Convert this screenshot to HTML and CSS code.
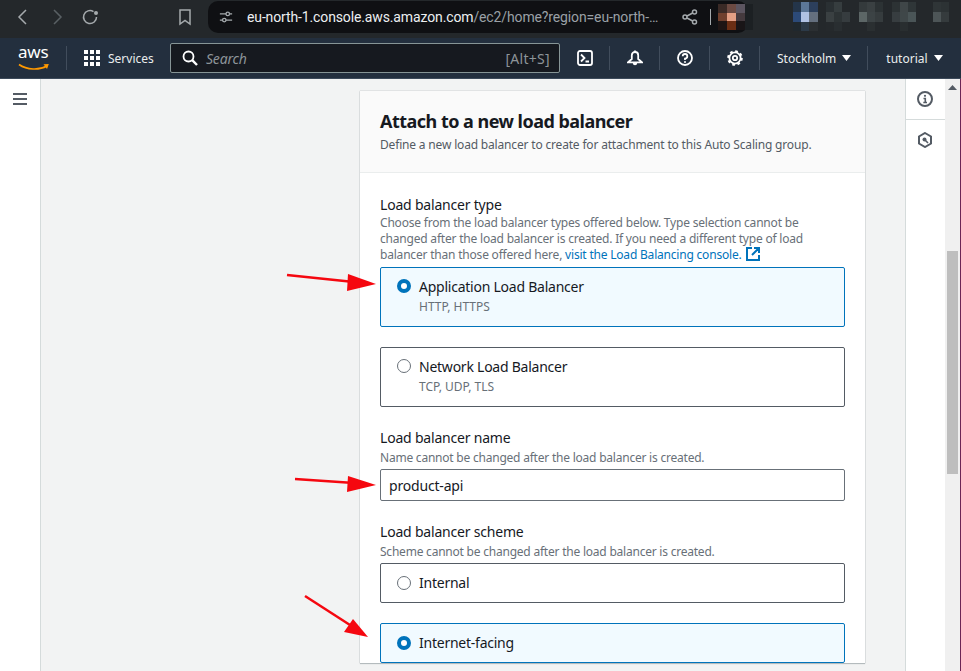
FILE: index.html
```html
<!DOCTYPE html>
<html lang="en">
<head>
<meta charset="utf-8">
<title>Attach to a new load balancer</title>
<link rel="stylesheet" href="styles.css">
</head>
<body>
<div class="chrome">
  <svg class="c-ico back" width="20" height="20" viewBox="0 0 20 20"><path d="M13 3 L6 10 L13 17" class="st-grey"/></svg>
  <svg class="c-ico fwd" width="20" height="20" viewBox="0 0 20 20"><path d="M7 3 L14 10 L7 17" class="st-dim"/></svg>
  <svg class="c-ico reload" width="20" height="20" viewBox="0 0 20 20"><path d="M16.5 10 A6.5 6.5 0 1 1 13.5 4.6" class="st-grey"/><circle cx="16" cy="6" r="2" class="fl-grey"/></svg>
  <svg class="c-ico mark" width="20" height="20" viewBox="0 0 20 20"><path d="M5 3 H15 V17 L10 13.5 L5 17 Z" class="st-grey"/></svg>
  <div class="url">
    <svg class="tune" width="14" height="14" viewBox="0 0 16 16"><path d="M1 4.5 H8 M12 4.5 H15 M1 11.5 H4 M8 11.5 H15" class="st-grey"/><circle cx="10" cy="4.5" r="2" class="st-grey"/><circle cx="6" cy="11.5" r="2" class="st-grey"/></svg>
    <span class="url-text"><span class="url-host">eu-north-1.console.aws.amazon.com</span>/ec2/home?region=eu-north-…</span>
    <svg class="share" width="16" height="16" viewBox="0 0 16 16"><circle cx="12.5" cy="3" r="2" class="st-grey"/><circle cx="12.5" cy="13" r="2" class="st-grey"/><circle cx="3" cy="8" r="2" class="st-grey"/><path d="M5 7 L10.7 4 M5 9 L10.7 12" class="st-grey"/></svg>
    <span class="url-sep"></span>
    <svg class="avatar" width="35" height="26" viewBox="0 0 35 30" preserveAspectRatio="none" shape-rendering="crispEdges">
      <rect x="0" y="0" width="9" height="10" fill="#3a2a26"/><rect x="9" y="0" width="9" height="10" fill="#6c4a42"/><rect x="18" y="0" width="9" height="10" fill="#5c5560"/><rect x="27" y="0" width="8" height="10" fill="#1c2023"/>
      <rect x="0" y="10" width="9" height="10" fill="#70402e"/><rect x="9" y="10" width="9" height="10" fill="#e49f84"/><rect x="18" y="10" width="9" height="10" fill="#453a3e"/><rect x="27" y="10" width="8" height="10" fill="#1c2023"/>
      <rect x="0" y="20" width="9" height="10" fill="#1e1514"/><rect x="9" y="20" width="9" height="10" fill="#6b2e14"/><rect x="18" y="20" width="9" height="10" fill="#191517"/><rect x="27" y="20" width="8" height="10" fill="#1c2023"/>
    </svg>
  </div>
  <svg class="blur" width="158" height="30" viewBox="0 0 158 30" shape-rendering="crispEdges">
    <rect x="0" y="0" width="8" height="10" fill="#24354a"/><rect x="8" y="0" width="8" height="10" fill="#5c7798"/><rect x="16" y="0" width="9" height="10" fill="#2c3f5c"/>
    <rect x="0" y="10" width="8" height="10" fill="#2c4a78"/><rect x="8" y="10" width="8" height="10" fill="#b0c2e4"/><rect x="16" y="10" width="9" height="10" fill="#646f7e"/>
    <rect x="0" y="20" width="8" height="9" fill="#20282e"/><rect x="8" y="20" width="8" height="9" fill="#2c3a48"/><rect x="16" y="20" width="9" height="9" fill="#2b2f32"/>
    <rect x="33" y="0" width="8" height="10" fill="#2a3033"/><rect x="41" y="0" width="8" height="10" fill="#363d3f"/>
    <rect x="33" y="10" width="8" height="10" fill="#3a4042"/><rect x="41" y="10" width="8" height="10" fill="#2d3335"/><rect x="49" y="10" width="8" height="10" fill="#363c3f"/>
    <rect x="33" y="20" width="8" height="9" fill="#25292c"/><rect x="41" y="20" width="8" height="9" fill="#292e31"/>
    <rect x="66" y="0" width="8" height="10" fill="#343a3c"/><rect x="74" y="0" width="8" height="10" fill="#3a4042"/><rect x="82" y="0" width="8" height="10" fill="#2c3234"/>
    <rect x="66" y="10" width="8" height="10" fill="#5c6666"/><rect x="74" y="10" width="8" height="10" fill="#3c4345"/><rect x="82" y="10" width="8" height="10" fill="#363c3e"/>
    <rect x="74" y="20" width="8" height="9" fill="#2a2f31"/>
    <rect x="99" y="0" width="8" height="10" fill="#2c3234"/><rect x="107" y="0" width="8" height="10" fill="#3f4648"/><rect x="115" y="0" width="8" height="10" fill="#2f3638"/>
    <rect x="99" y="10" width="8" height="10" fill="#373d40"/><rect x="107" y="10" width="8" height="10" fill="#3f4749"/><rect x="115" y="10" width="8" height="10" fill="#4a5557"/>
    <rect x="107" y="20" width="8" height="9" fill="#292e30"/>
    <rect x="140" y="0" width="8" height="10" fill="#2f3537"/><rect x="148" y="0" width="8" height="10" fill="#2c3234"/>
    <rect x="140" y="10" width="8" height="10" fill="#4d5557"/><rect x="148" y="10" width="8" height="10" fill="#353b3d"/>
  </svg>
</div>

<nav class="nav">
  <div class="aws">
    <span class="aws-text">aws</span>
    <svg class="aws-smile" width="32" height="8" viewBox="0 0 32 8"><path d="M1 1.5 C9 7 21 7.5 29 3" class="smile"/><path d="M25.5 1.2 L30.8 1 L29 6 Z" class="smile-tip"/></svg>
  </div>
  <span class="nav-sep first"></span>
  <svg class="grid-ico" width="16" height="16" viewBox="0 0 16 16">
    <rect x="0" y="0" width="4" height="4"/><rect x="6" y="0" width="4" height="4"/><rect x="12" y="0" width="4" height="4"/>
    <rect x="0" y="6" width="4" height="4"/><rect x="6" y="6" width="4" height="4"/><rect x="12" y="6" width="4" height="4"/>
    <rect x="0" y="12" width="4" height="4"/><rect x="6" y="12" width="4" height="4"/><rect x="12" y="12" width="4" height="4"/>
  </svg>
  <span class="nav-text services">Services</span>
  <div class="search">
    <svg width="16" height="16" viewBox="0 0 16 16"><circle cx="6.5" cy="6.5" r="5" class="st-white"/><path d="M10.2 10.2 L15 15" class="st-white-b"/></svg>
    <span class="search-ph">Search</span>
    <span class="search-key">[Alt+S]</span>
  </div>
  <svg class="nav-ico" width="16" height="16" viewBox="0 0 16 16"><rect x="1" y="1" width="14" height="14" rx="2" class="st-white"/><path d="M4 4.5 L7.5 8 L4 11.5 M8.5 11.5 H12" class="st-white"/></svg>
  <span class="nav-sep"></span>
  <svg class="nav-ico" width="16" height="16" viewBox="0 0 16 16"><path d="M4.8 9 V5.2 A3.2 3.2 0 0 1 11.2 5.2 V9 L15 12.3 H1 Z" class="st-white"/><path d="M8 0.5 V2" class="st-white"/><path d="M5.8 13 A2.2 2.2 0 0 0 10.2 13 Z" class="fl-white"/></svg>
  <span class="nav-sep"></span>
  <svg class="nav-ico" width="16" height="16" viewBox="0 0 16 16"><circle cx="8" cy="8" r="7" class="st-white"/><path d="M5.7 6.2 A2.3 2.3 0 1 1 8 8.6 V10" class="st-white"/><circle cx="8" cy="12" r="1" class="fl-white"/></svg>
  <span class="nav-sep"></span>
  <svg class="nav-ico" width="16" height="16" viewBox="0 0 16 16"><circle cx="8" cy="8" r="5.6" class="st-white"/><circle cx="8" cy="8" r="6.8" class="gear-teeth"/><circle cx="8" cy="8" r="2.2" class="st-white"/></svg>
  <span class="nav-sep"></span>
  <span class="nav-text region">Stockholm</span>
  <svg class="caret" width="9" height="6" viewBox="0 0 9 6"><path d="M0 0 H9 L4.5 6 Z" class="fl-white"/></svg>
  <span class="nav-sep"></span>
  <span class="nav-text user">tutorial</span>
  <svg class="caret" width="9" height="6" viewBox="0 0 9 6"><path d="M0 0 H9 L4.5 6 Z" class="fl-white"/></svg>
</nav>

<div class="page">
  <aside class="rail-left">
    <svg width="14" height="12" viewBox="0 0 14 12"><path d="M0 1 H14 M0 6 H14 M0 11 H14" class="st-rail"/></svg>
  </aside>
  <main class="content">
    <section class="card">
      <header class="card-head">
        <h1>Attach to a new load balancer</h1>
        <p>Define a new load balancer to create for attachment to this Auto Scaling group.</p>
      </header>
      <div class="card-body">
        <div class="label">Load balancer type</div>
        <p class="hint">Choose from the load balancer types offered below. Type selection cannot be changed after the load balancer is created. If you need a different type of load balancer than those offered here, <a href="#">visit the Load Balancing console.<svg class="ext" width="14" height="14" viewBox="0 0 14 14"><path d="M6 1 H1 V13 H13 V8 M8 1 H13 V6 M13 1 L6 8" class="st-link"/></svg></a></p>
        <div class="opts">
          <div class="opt on tall"><span class="radio"></span><div><div class="opt-title">Application Load Balancer</div><div class="opt-sub">HTTP, HTTPS</div></div></div>
          <div class="opt tall"><span class="radio"></span><div><div class="opt-title">Network Load Balancer</div><div class="opt-sub">TCP, UDP, TLS</div></div></div>
        </div>
        <div class="label gap-top">Load balancer name</div>
        <p class="hint one">Name cannot be changed after the load balancer is created.</p>
        <div class="input">product-api</div>
        <div class="label gap-top">Load balancer scheme</div>
        <p class="hint one">Scheme cannot be changed after the load balancer is created.</p>
        <div class="opts">
          <div class="opt"><span class="radio"></span><div class="opt-title">Internal</div></div>
          <div class="opt on"><span class="radio"></span><div class="opt-title">Internet-facing</div></div>
        </div>
      </div>
    </section>
  </main>
  <aside class="rail-right">
    <div class="rail-cell">
      <svg width="16" height="16" viewBox="0 0 16 16"><circle cx="8" cy="8" r="7" class="st-rail"/><path d="M6.5 7.5 H8.3 V11.5 M6.3 11.5 H10" class="st-rail-t"/><circle cx="8" cy="4.8" r="1.1" class="fl-rail"/></svg>
    </div>
    <div class="rail-cell">
      <svg width="16" height="16" viewBox="0 0 16 16"><path d="M8 1 L14 4.5 V11.5 L8 15 L2 11.5 V4.5 Z" class="st-rail"/><circle cx="7.5" cy="7.5" r="2" class="fl-rail"/><path d="M8 8 L11 11" class="st-rail-t"/></svg>
    </div>
  </aside>
  <div class="scrollbar">
    <svg width="9" height="5" viewBox="0 0 9 5"><path d="M0 5 L4.5 0 L9 5 Z" class="fl-rail"/></svg>
    <div class="thumb"></div>
  </div>
  <div class="edge"></div>
</div>

<svg class="arrows" width="961" height="671" viewBox="0 0 961 671">
  <path d="M287 275 L354 282" class="arrow-line"/><path d="M376 284 L348 274 L347 291 Z" class="arrow-head"/>
  <path d="M295 479 L354 483" class="arrow-line"/><path d="M376 485 L348 476 L347 492 Z" class="arrow-head"/>
  <path d="M305 596 L350 625" class="arrow-line"/><path d="M368 637 L344 632 L353 619 Z" class="arrow-head"/>
</svg>
</body>
</html>
```
FILE: styles.css
```css
* { box-sizing: border-box; }
html, body { margin: 0; height: 671px; overflow: hidden; }
body { font-family: "Noto Sans", sans-serif; background: #fff; position: relative; display: flex; flex-direction: column; }
h1, p { margin: 0; }

.st-grey, .st-dim, .st-white, .st-white-b, .st-link, .st-rail, .st-rail-t { fill: none; stroke-width: 1.5; }
.st-grey { stroke: #a5aaad; }
.st-dim { stroke: #596064; }
.st-white { stroke: #fff; stroke-width: 1.8; }
.st-white-b { stroke: #fff; stroke-width: 2.4; }
.st-link { stroke: #0073bb; stroke-width: 2; }
.st-rail { stroke: #545b64; stroke-width: 2; }
.st-rail-t { stroke: #545b64; stroke-width: 1.6; }
.gear-teeth { fill: none; stroke: #fff; stroke-width: 2; stroke-dasharray: 2.7 2.64; }
.fl-grey { fill: #a5aaad; }
.fl-white { fill: #fff; }
.fl-rail { fill: #545b64; }

.chrome { height: 38px; flex: none; background: #24282b; display: flex; align-items: center; padding: 0 0 4px 13px; }
.c-ico { flex: none; }
.back { margin-right: 14px; }
.fwd { margin-right: 13px; }
.reload { margin-right: 75px; }
.mark { margin-right: 13px; }
.url { width: 540px; height: 32px; flex: none; background: #0f1013; border-radius: 10px; display: flex; align-items: center; padding-left: 11px; }
.tune { flex: none; margin-right: 14px; }
.url-text { font-family: Roboto, sans-serif; font-size: 14px; letter-spacing: -0.13px; color: #9aa0a6; white-space: nowrap; width: 423px; flex: none; }
.url-host { color: #eceff1; }
.share { flex: none; margin-left: 12px; }
.url-sep { width: 1px; height: 16px; background: #a5aaad; margin-left: 12px; flex: none; }
.avatar { flex: none; margin-left: 7px; }
.blur { flex: none; margin-left: 45px; }

.nav { height: 41px; flex: none; background: #232f3e; border-bottom: 1px solid #3c4a5a; display: flex; align-items: center; padding-left: 18px; }
.aws { width: 32px; height: 30px; display: flex; flex-direction: column; align-items: flex-start; flex: none; }
.aws-text { font-size: 17px; line-height: 17px; color: #fff; letter-spacing: -0.2px; display: block; height: 20px; }
.aws-smile { display: block; }
.smile { fill: none; stroke: #f90; stroke-width: 1.6; }
.smile-tip { fill: #f90; }
.nav-sep { width: 1px; height: 24px; background: #414d5c; margin: 0 17px 0 16px; flex: none; }
.grid-ico { fill: #fff; flex: none; margin-right: 8px; }
.nav-text { font-size: 12px; color: #eaeded; white-space: nowrap; }
.services { width: 46px; margin-right: 16px; }
.search { width: 390px; height: 30px; background: #16191f; border: 1px solid #879596; border-radius: 2px; display: flex; align-items: center; padding: 0 9px 0 11px; margin-right: 17px; flex: none; }
.search-ph { font-size: 14px; font-style: italic; color: #8d9499; margin-left: 8px; flex: 1; padding-top: 1px; letter-spacing: -0.2px; }
.search-key { font-size: 14px; color: #8d9499; padding-top: 1px; letter-spacing: 0.3px; }
.nav-ico { flex: none; }
.user { margin-left: 1px; }
.caret { flex: none; margin-left: 6px; }

.page { flex: 1; min-height: 0; display: flex; }
.rail-left { width: 41px; flex: none; background: #fff; border-right: 1px solid #d5dbdb; padding: 14px 13px; }
.rail-left svg { display: block; }
.content { flex: 1; min-width: 0; background: #f2f3f3; padding: 12px 40px 0 319px; overflow: hidden; }
.card { background: #fff; box-shadow: 0 0 1px 0 rgba(0,28,36,.4), 0 1px 1px 0 rgba(0,28,36,.2); width: 505px; }
.card-head { background: #fafafa; border-bottom: 1px solid #eaeded; padding: 19px 20px 20px; height: 82px; }
.card-head h1 { font-size: 18px; line-height: 22px; font-weight: 700; color: #16191f; letter-spacing: -0.52px; }
.card-head p { font-size: 12px; line-height: 20px; color: #545b64; margin-top: 3px; letter-spacing: -0.175px; }
.card-body { padding: 22px 20px 0; }
.label { font-size: 14px; line-height: 20px; color: #16191f; letter-spacing: -0.2px; }
.gap-top { margin-top: 21px; }
.hint { font-size: 12px; line-height: 16px; color: #687078; margin: 0 0 4px; letter-spacing: -0.2px; }
.hint.one { margin: 2px 0 3px; letter-spacing: -0.22px; }
.hint a { color: #0073bb; text-decoration: none; }
.ext { vertical-align: -2px; margin-left: 5px; }
.opts { display: flex; flex-direction: column; gap: 20px; }
.opt { height: 40px; border: 1px solid #545b64; border-radius: 2px; background: #fff; display: flex; align-items: center; gap: 8px; padding-left: 16px; }
.opt.tall { height: 60px; align-items: flex-start; padding-top: 9px; }
.tall .radio { margin-top: 2px; }
.opt.on { border-color: #0073bb; background: #f1faff; }
.radio { width: 14px; height: 14px; border: 1px solid #687078; border-radius: 50%; flex: none; background: #fff; }
.on .radio { border: 4px solid #0073bb; }
.opt-title { font-size: 14px; line-height: 20px; color: #16191f; letter-spacing: -0.24px; }
.opt-sub { font-size: 12px; line-height: 16px; color: #687078; margin-top: 2px; }
.input { height: 32px; border: 1px solid #687078; border-radius: 2px; padding-left: 8px; font-size: 14px; line-height: 31px; color: #16191f; letter-spacing: -0.18px; }

.rail-right { width: 40px; flex: none; background: #fff; border-left: 1px solid #d5dbdb; }
.rail-cell { height: 41px; padding-right: 1px; border-bottom: 1px solid #d5dbdb; display: flex; align-items: center; justify-content: center; }
.rail-cell + .rail-cell { border-bottom: 0; height: 40px; }
.scrollbar { width: 15px; flex: none; background: #f0f0f0; display: flex; flex-direction: column; align-items: center; padding-top: 6px; }
.scrollbar svg { display: block; }
.thumb { width: 11px; height: 223px; background: #bebebe; margin-top: 161px; }
.edge { width: 1px; flex: none; background: #6b2455; }

.arrows { position: absolute; left: 0; top: 0; pointer-events: none; }
.arrow-line { fill: none; stroke: #f5070f; stroke-width: 2.5; }
.arrow-head { fill: #f5070f; }
```
